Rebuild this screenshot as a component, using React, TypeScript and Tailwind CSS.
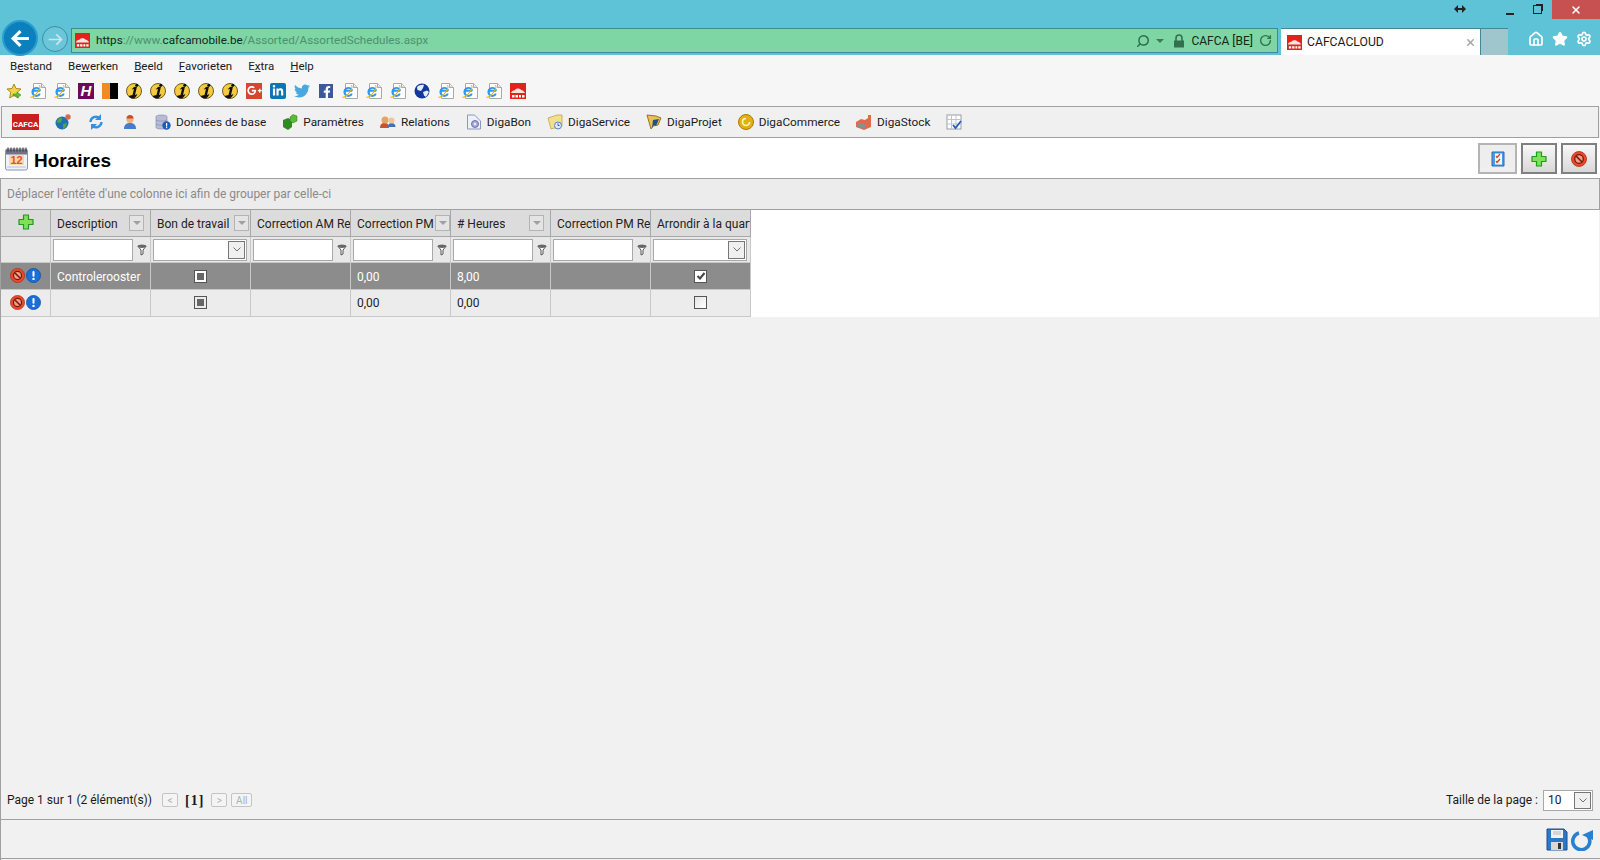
import { ReactNode } from "react";
import { FaFacebookF, FaGooglePlusG, FaLinkedinIn, FaTwitter } from "react-icons/fa";
import { Home, RotateCw, Search, Settings, Star, X } from "lucide-react";

type SvgProps = { className?: string };

function CafcaSquare({ className = "w-4 h-4" }: SvgProps) {
  return (
    <svg viewBox="0 0 16 16" className={className}>
      <rect width="16" height="16" fill="#e3231b" />
      <path d="M1 10c1-3 3-2 4-3 1-2 5-2 6 0 1 0 3 1 4 3z" fill="#f6e4e0" />
      <path d="M2 12h2.500v2.500H2zM5.500 12H8v2.500H5.500zM9 12h2v2.500H9zM12 12h2.500v2.500H12z" fill="#fff" />
    </svg>
  );
}

function IeDoc({ className = "w-4 h-4" }: SvgProps) {
  return (
    <svg viewBox="0 0 16 16" className={className}>
      <path d="M3.500 .5h8l4 4v11h-12z" fill="#fff" stroke="#a9a9a9" />
      <path d="M11.500 .5v4h4" fill="#e6e6e6" stroke="#a9a9a9" />
      <path d="M2.800 7.800h7.400M9.900 10.800a4 4 0 1 1 .3-3" fill="none" stroke="#2f96e8" strokeWidth="1.900" />
      <path d="M.5 14c1.200 1 6-2 8.500-7 1.200-2.500 1.600-4 0-4.500" fill="none" stroke="#efb324" strokeWidth="1.100" />
    </svg>
  );
}

function YellowI({ className = "w-4 h-4" }: SvgProps) {
  return (
    <svg viewBox="0 0 16 16" className={className}>
      <circle cx="8" cy="8" r="7.500" fill="#f3cb3c" stroke="#4a3a08" strokeWidth="0.800" />
      <path d="M2.500 13l4-1 1.500-6-2.500.5 2.500-2.500 3-.5L9 12l2.500-1c-1 2.500-3 4.500-5 4.500-1.500 0-3-1-4-2.500z" fill="#111" />
      <circle cx="10.800" cy="2.300" r="1.500" fill="#111" />
    </svg>
  );
}

function Globe({ className = "w-4 h-4" }: SvgProps) {
  return (
    <svg viewBox="0 0 16 16" className={className}>
      <circle cx="8" cy="8" r="7.500" fill="#12389c" />
      <path d="M3 4c2-2 5-2.500 7-2L9 5 7 8 3.500 7zM9 9l4-1.500L15 9l-3 5-2-1.500z" fill="#e4eefa" />
    </svg>
  );
}

function RedStop({ className = "w-4 h-4" }: SvgProps) {
  return (
    <svg viewBox="0 0 16 16" className={className}>
      <circle cx="8" cy="8" r="7.500" fill="#ec4a2c" stroke="#b02a14" strokeWidth="0.800" />
      <circle cx="8" cy="8" r="4.300" fill="#f79b85" stroke="#701a0c" strokeWidth="1.300" />
      <path d="M5 5l6 6" stroke="#701a0c" strokeWidth="1.600" />
    </svg>
  );
}

function BlueInfo({ className = "w-4 h-4" }: SvgProps) {
  return (
    <svg viewBox="0 0 16 16" className={className}>
      <circle cx="8" cy="8" r="7.500" fill="#1a6fd8" stroke="#0f4c9f" strokeWidth="0.800" />
      <rect x="6.900" y="3.200" width="2.200" height="6" rx="1" fill="#fff" />
      <circle cx="8" cy="11.600" r="1.300" fill="#fff" />
    </svg>
  );
}

function GreenPlus({ className = "w-4 h-4" }: SvgProps) {
  return (
    <svg viewBox="0 0 16 16" className={className}>
      <path d="M5.500 1h5v4.500H15v5h-4.500V15h-5v-4.500H1v-5h4.500z" fill="#7fe05a" stroke="#1f9a1f" strokeWidth="1.200" strokeLinejoin="round" />
    </svg>
  );
}

function Funnel() {
  return (
    <svg viewBox="0 0 10 12" className="w-[10px] h-3">
      <path d="M.8 2l3.200 4v5l2-1V6l3.200-4z" fill="#fff" stroke="#555" />
      <ellipse cx="5" cy="2.300" rx="4" ry="1.700" fill="#666" />
    </svg>
  );
}

function Calendar() {
  return (
    <svg viewBox="0 0 25 25" className="w-[25px] h-[25px]">
      <rect x="1.500" y="3" width="22" height="21" rx="2" fill="#f1f3fa" stroke="#8b93b5" />
      <rect x="2" y="3.500" width="21" height="5" fill="#6f7486" />
      <path d="M4 1.500v4M7 1.500v4M10 1.500v4M13 1.500v4M16 1.500v4M19 1.500v4M22 1.500v4" stroke="#333" />
      <rect x="5" y="9" width="15" height="10" fill="#fbd9ab" />
      <text x="12.500" y="18" textAnchor="middle" fontSize="11" fontWeight="700" fill="#e4561c" fontFamily="Liberation Sans, sans-serif">12</text>
      <path d="M3 21h19" stroke="#b8c0dc" />
    </svg>
  );
}

function TopIcon({ kind }: { kind: string }) {
  if (kind === "fav")
    return (
      <svg viewBox="0 0 16 16" className="w-4 h-4">
        <path d="M8 1l2 4.500 5 .5-3.700 3.200L12.300 15 8 12.300 3.700 15l1-5.800L1 6l5-.5z" fill="#f7d34a" stroke="#a98920" />
        <path d="M7 11h4V9l4 3-4 3v-2H7z" fill="#5cc13c" stroke="#2f8a1f" strokeWidth="0.500" />
      </svg>
    );
  if (kind === "ie") return <IeDoc />;
  if (kind === "h")
    return (
      <div className="w-4 h-4 bg-[#6a0a5d] flex items-center justify-center text-white text-[15px] font-bold italic leading-none [font-family:'Liberation_Sans',sans-serif]">
        H
      </div>
    );
  if (kind === "flag")
    return (
      <div className="w-4 h-4 flex">
        <div className="w-2 bg-[#f08a24]" />
        <div className="w-2 bg-black" />
      </div>
    );
  if (kind === "yellow") return <YellowI />;
  if (kind === "gplus")
    return (
      <div className="w-4 h-4 bg-[#d5452f] flex items-center justify-center">
        <FaGooglePlusG className="text-white w-[15px] h-[15px]" />
      </div>
    );
  if (kind === "in")
    return (
      <div className="w-4 h-4 rounded-[2px] bg-[#0a76b4] flex items-center justify-center">
        <FaLinkedinIn className="text-white w-3 h-3" />
      </div>
    );
  if (kind === "tw") return <FaTwitter className="text-[#4aa8e0] w-4 h-4" />;
  if (kind === "fb")
    return (
      <div className="w-[14px] h-[14px] mt-px bg-[#3b5998] flex items-end justify-end overflow-hidden">
        <FaFacebookF className="text-white w-3 h-3" />
      </div>
    );
  if (kind === "globe") return <Globe />;
  return <CafcaSquare />;
}

const favorites = ["fav", "ie", "ie", "h", "flag", "yellow", "yellow", "yellow", "yellow", "yellow", "gplus", "in", "tw", "fb", "ie", "ie", "ie", "globe", "ie", "ie", "ie", "cafca"];

function NavIcon({ kind }: { kind: string }) {
  switch (kind) {
    case "net":
      return (
        <svg viewBox="0 0 16 16" className="w-4 h-4">
          <circle cx="7" cy="9" r="6.500" fill="#1f6fb4" />
          <path d="M4 4c2-1 3 0 3 2L5 9 1.500 8zM8 10l4-1-1 4-3 2z" fill="#4fa83f" />
          <circle cx="13" cy="3" r="2.700" fill="#d9694a" />
        </svg>
      );
    case "sync":
      return (
        <svg viewBox="0 0 16 16" className="w-4 h-4" fill="none" stroke="#3a8fdc" strokeWidth="2.400">
          <path d="M2.500 8a5.500 5.500 0 0 1 9-4" />
          <path d="M13.500 8a5.500 5.500 0 0 1-9 4" />
          <path d="M13 0v6H7z" fill="#3a8fdc" stroke="none" />
          <path d="M3 16v-6h6z" fill="#3a8fdc" stroke="none" />
        </svg>
      );
    case "user":
      return (
        <svg viewBox="0 0 16 16" className="w-4 h-4">
          <path d="M2 15c0-5 3-6 6-6s6 1 6 6z" fill="#3f7fd0" />
          <circle cx="8" cy="5.500" r="3.500" fill="#eab08a" />
          <path d="M4.500 4.500a3.500 3.500 0 0 1 7 0z" fill="#d9452a" />
        </svg>
      );
    case "db":
      return (
        <svg viewBox="0 0 16 16" className="w-4 h-4">
          <path d="M1 2.500c0-2 11-2 11 0v11c0 2-11 2-11 0z" fill="#b4bcd6" stroke="#7c86a8" strokeWidth="0.600" />
          <path d="M1 6c2 1.500 9 1.500 11 0M1 10c2 1.500 9 1.500 11 0" fill="none" stroke="#7c86a8" strokeWidth="0.600" />
          <circle cx="11.500" cy="11.500" r="4.200" fill="#1a5fb8" />
          <rect x="11" y="9" width="1.200" height="3.500" fill="#fff" />
          <rect x="11" y="13" width="1.200" height="1.200" fill="#fff" />
        </svg>
      );
    case "param":
      return (
        <svg viewBox="0 0 16 16" className="w-4 h-4">
          <path d="M1 6l5-2 4 2v7l-4 3-5-3z" fill="#2f8a22" />
          <path d="M8 3l3-2.500 4 1.500v5l-4 2-3-2z" fill="#5cba3a" stroke="#2b7a1d" strokeWidth="0.500" />
        </svg>
      );
    case "rel":
      return (
        <svg viewBox="0 0 16 16" className="w-4 h-4">
          <path d="M0 14c0-4 2-5 4.500-5S9 10 9 14z" fill="#c9542b" />
          <circle cx="5" cy="6" r="3.500" fill="#e9a266" />
          <path d="M8 13c0-3 1.500-4 3.500-4s4 1 4 4z" fill="#3f72b8" />
          <circle cx="11.500" cy="6.500" r="3" fill="#f0c59a" />
        </svg>
      );
    case "bon":
      return (
        <svg viewBox="0 0 16 16" className="w-4 h-4">
          <path d="M1.500 1h7l6 6v8h-13z" fill="#eef1fa" stroke="#8d97b8" />
          <circle cx="9" cy="10" r="3.500" fill="#a8a8d8" stroke="#6f74a8" />
          <circle cx="9" cy="10" r="1.200" fill="#eef1fa" />
        </svg>
      );
    case "service":
      return (
        <svg viewBox="0 0 16 16" className="w-4 h-4">
          <path d="M1 4l9-3h5v11l-11 3z" fill="#f3de8c" stroke="#b99b3a" strokeWidth="0.700" />
          <circle cx="11" cy="11.500" r="3.500" fill="#dcebfa" stroke="#4c86c4" />
          <path d="M11 9.500v2h1.500" stroke="#2d5f9a" fill="none" />
        </svg>
      );
    case "projet":
      return (
        <svg viewBox="0 0 16 16" className="w-4 h-4">
          <path d="M1 1l9 1 5 2-3 7-5 1-2 3z" fill="#e9c05a" stroke="#9c7414" />
          <path d="M7 6l6-1-3 7-2-1-2 3z" fill="#274f8c" />
        </svg>
      );
    case "commerce":
      return (
        <svg viewBox="0 0 16 16" className="w-4 h-4">
          <circle cx="8" cy="8" r="7.500" fill="#e3b010" stroke="#a87d08" />
          <circle cx="8" cy="8" r="3.500" fill="none" stroke="#fff6d0" strokeWidth="1.600" strokeDasharray="16 6" />
        </svg>
      );
    case "stock":
      return (
        <svg viewBox="0 0 16 16" className="w-4 h-4">
          <path d="M0 8l5-3 4 1 3-2V1h3v12l-7 3-8-3z" fill="#e2694a" />
          <path d="M1 9l8 1v5l-8-2z" fill="#8d8d8d" />
        </svg>
      );
    case "table":
      return (
        <svg viewBox="0 0 16 16" className="w-4 h-4">
          <rect x="1" y="1" width="14" height="14" fill="#fff" stroke="#9a9aa8" />
          <path d="M1 5.500h14M1 10h14M5.500 1v14M10 1v14" stroke="#c2c2cc" />
          <path d="M7 11l2.500 3L15 7" fill="none" stroke="#1f5fc0" strokeWidth="1.800" />
        </svg>
      );
    default:
      return <div />;
  }
}

const navItems = [
  { kind: "net" },
  { kind: "sync", cls: "ml-px" },
  { kind: "user", cls: "ml-[2px]" },
  { kind: "db", label: "Données de base", cls: "ml-px" },
  { kind: "param", label: "Paramètres" },
  { kind: "rel", label: "Relations" },
  { kind: "bon", label: "DigaBon" },
  { kind: "service", label: "DigaService" },
  { kind: "projet", label: "DigaProjet" },
  { kind: "commerce", label: "DigaCommerce" },
  { kind: "stock", label: "DigaStock" },
  { kind: "table" },
];

function Cell({ children, className = "" }: { children?: ReactNode; className?: string }) {
  return <div className={`flex items-center overflow-hidden whitespace-nowrap border-r border-b ${className}`}>{children}</div>;
}

function HeaderCell({ label, filter, pad = "" }: { label: string; filter: boolean; pad?: string }) {
  return (
    <Cell className="border-[#a8a8a8] bg-[#dcdcdc] pl-[6px] justify-between">
      <span className="overflow-hidden pt-[2px]">{label}</span>
      {filter && (
        <span className={`shrink-0 w-[15px] h-4 border border-[#b4b4b4] bg-[#e4e4e4] flex items-center justify-center ${pad}`}>
          <span className="border-x-[4px] border-t-[4px] border-x-transparent border-t-[#a0a0a0]" />
        </span>
      )}
    </Cell>
  );
}

function FilterInput() {
  return (
    <Cell className="border-[#c8c8c8] bg-[#e8e8e8] pl-[2px] gap-[4px]">
      <div className="w-[80px] h-[22px] bg-white border border-[#a8a8a8]" />
      <Funnel />
    </Cell>
  );
}

function Chevron() {
  return (
    <svg viewBox="0 0 8 5" className="w-2 h-[5px]" fill="none" stroke="#707070">
      <path d="M.5 .5L4 4 7.500 .5" />
    </svg>
  );
}

function FilterSelect() {
  return (
    <Cell className="border-[#c8c8c8] bg-[#e8e8e8] pl-[2px]">
      <div className="w-[94px] h-[22px] bg-white border border-[#a8a8a8] flex justify-end p-px">
        <div className="w-[17px] h-full bg-[#f0f0f0] border border-[#777] flex items-center justify-center">
          <Chevron />
        </div>
      </div>
    </Cell>
  );
}

function RowIcons({ className }: { className: string }) {
  return (
    <Cell className={`${className} justify-center gap-px pb-[2px]`}>
      <RedStop className="w-[15px] h-[15px]" />
      <BlueInfo className="w-[15px] h-[15px]" />
    </Cell>
  );
}

function Mixed({ light }: { light: boolean }) {
  return (
    <div className={`w-[13px] h-[13px] flex items-center justify-center ${light ? "bg-[#ececec] border-[1.500px] border-[#555]" : "bg-white border border-[#555]"}`}>
      <div className="w-[7px] h-[7px] bg-[#666]" />
    </div>
  );
}

function PageButton({ children, w }: { children: ReactNode; w: string }) {
  return <div className={`${w} h-[14px] border border-[#c4c4c4] rounded-[2px] bg-[#f4f4f4] flex items-center justify-center text-[#b0b0b0] text-[10px]`}>{children}</div>;
}

function ActionButton({ children, w, on }: { children: ReactNode; w: string; on: boolean }) {
  return (
    <button className={`${w} h-[31px] flex items-center justify-center border-2 ${on ? "border-[#808080] bg-gradient-to-b from-[#f8f8f8] to-[#d8d8d8]" : "border-[#b4b4b4] bg-[#eeeeee]"}`}>
      {children}
    </button>
  );
}

export default function App() {
  const s1 = "border-[#c8c8c8] bg-[#8c8c8c] text-white pl-[6px] pt-px";
  const s2 = "border-[#c8c8c8] bg-[#ececec] pl-[6px] pb-px";

  return (
    <div className="h-[860px] w-[1600px] flex flex-col overflow-hidden bg-[#f1f1f1] text-[12px] text-[#1a1a1a] [font-family:Roboto,sans-serif]">
      {/* browser chrome */}
      <div className="h-[55px] shrink-0 bg-[#5fc3d8] flex flex-col">
        <div className="h-[19px] flex justify-end items-start">
          <svg viewBox="0 0 12 8" className="w-3 h-2 mt-[5px] mr-[32px]" fill="#222">
            <path d="M0 4l4-4v3h4V0l4 4-4 4V5H4v3z" />
          </svg>
          <div className="w-[24px] h-[19px] flex items-center justify-center">
            <div className="w-2 h-[2px] bg-[#222] mt-2" />
          </div>
          <div className="w-[30px] h-[19px] flex items-center justify-center">
            <div className="w-[9px] h-[9px] border-[1.500px] border-[#222] shadow-[2px_-2px_0_-1px_#222]" />
          </div>
          <div className="w-[48px] h-[19px] bg-[#c75050] flex items-center justify-center">
            <X className="w-[12px] h-[12px] text-white" strokeWidth={3} />
          </div>
        </div>
        <div className="flex-1 flex items-end">
          <div className="relative w-[71px] h-full">
            <div className="absolute left-[2px] top-[1px] w-[36px] h-[36px] rounded-full bg-[#0b80bd] border-2 border-[#2a9ccd] flex items-center justify-center">
              <svg viewBox="0 0 20 20" className="w-[21px] h-[21px]" fill="none" stroke="#fff" strokeWidth="3">
                <path d="M18 10H3M10 3l-7 7 7 7" />
              </svg>
            </div>
            <div className="absolute left-[42px] top-[7px] w-[26px] h-[26px] rounded-full border border-[#3c8ea4] bg-[#6cc6da] flex items-center justify-center">
              <svg viewBox="0 0 20 20" className="w-[17px] h-[17px]" fill="none" stroke="#c8e8ee" strokeWidth="2">
                <path d="M2 10h15M11 4l6 6-6 6" />
              </svg>
            </div>
          </div>
          <div className="w-[1207px] h-[25px] mb-[2px] bg-[#7dd6a3] border border-[#3f8a96] flex items-center pl-[3px] pr-[5px]">
            <CafcaSquare className="w-[15px] h-[15px]" />
            <span className="ml-[6px] text-[11.7px] text-[#4f8f70]">
              <span className="text-[#16261e]">https</span>://www.<span className="text-[#16261e]">cafcamobile.be</span>/Assorted/AssortedSchedules.aspx
            </span>
            <Search className="ml-auto w-[14px] h-[14px] text-[#2f6b4a] -scale-x-100" strokeWidth={2.500} />
            <span className="ml-[6px] border-x-[4px] border-t-[4px] border-x-transparent border-t-[#3e7a5a]" />
            <svg viewBox="0 0 12 14" className="ml-[9px] w-3 h-[14px]">
              <path d="M3 7V4a3 3 0 0 1 6 0v3" fill="none" stroke="#34704f" strokeWidth="1.600" />
              <rect x="1" y="6.500" width="10" height="7" fill="#34704f" />
            </svg>
            <span className="ml-[6px] text-[12px] text-[#16261e]">CAFCA [BE]</span>
            <RotateCw className="ml-[6px] w-[13px] h-[13px] text-[#34704f]" strokeWidth={2.500} />
          </div>
          <div className="ml-[3px] w-[199px] h-[27px] bg-white flex items-center pl-[6px] pr-[4px] border-t border-[#3f8a96]">
            <CafcaSquare className="w-[15px] h-[15px]" />
            <span className="ml-[5px] text-[12.2px]">CAFCACLOUD</span>
            <X className="ml-auto w-[11px] h-[11px] text-[#aaaaaa]" strokeWidth={3.500} />
          </div>
          <div className="w-[28px] h-[27px] bg-[#9fc6cc] border-t border-l border-[#3f8a96]" />
          <div className="flex-1 h-[27px] mb-[3px] flex items-center justify-end gap-[8px] pr-[8px]">
            <Home className="w-4 h-4 text-white" strokeWidth={2.500} />
            <Star className="w-4 h-4 text-white fill-white" />
            <Settings className="w-4 h-4 text-white" strokeWidth={2.500} />
          </div>
        </div>
      </div>

      {/* menu */}
      <div className="h-[22px] shrink-0 bg-[#f6f6f6] flex items-center gap-[16px] pl-[10px] pt-[2px] text-[11.5px]">
        <span>B<u>e</u>stand</span>
        <span>Be<u>w</u>erken</span>
        <span><u>B</u>eeld</span>
        <span><u>F</u>avorieten</span>
        <span>E<u>x</u>tra</span>
        <span><u>H</u>elp</span>
      </div>

      {/* favorites */}
      <div className="h-[29px] shrink-0 bg-[#f6f6f6] flex items-center gap-[8px] pl-[6px] pb-[2px]">
        {favorites.map((kind, i) => (
          <div key={i} className="w-4 h-4 flex justify-center">
            <TopIcon kind={kind} />
          </div>
        ))}
      </div>

      {/* app nav */}
      <div className="h-[32px] shrink-0 bg-[#f0f0f0] border border-[#a0a0a0] mx-px flex items-center gap-[16px] pl-[10px]">
        <div className="w-[27px] h-4 bg-[#c9201c] flex items-end justify-center text-white text-[8px] font-bold leading-[10px]">CAFCA</div>
        {navItems.map((item) => (
          <div key={item.kind} className={`flex items-center gap-[5px] ${item.cls ?? ""}`}>
            <NavIcon kind={item.kind} />
            {item.label && <span className="pt-px text-[11.8px]">{item.label}</span>}
          </div>
        ))}
      </div>

      {/* page title */}
      <div className="h-[40px] shrink-0 bg-white flex items-center pl-[4px] pr-[3px]">
        <Calendar />
        <h1 className="ml-[5px] mt-[7px] text-[19px] font-bold text-black [font-family:'Liberation_Sans',sans-serif]">Horaires</h1>
        <div className="ml-auto mt-px flex gap-[4px]">
          <ActionButton w="w-[39px]" on={false}>
            <svg viewBox="0 0 16 16" className="w-4 h-4">
              <path d="M2 1h12v14H2z" fill="#4c9be0" stroke="#2a6cb0" />
              <rect x="5" y="2.500" width="7" height="11" fill="#f4f8fc" />
              <path d="M6 5l1 1.500L10 3M6 10l1 1.500L10 8" fill="none" stroke="#d43a2a" strokeWidth="1.300" />
            </svg>
          </ActionButton>
          <ActionButton w="w-[36px]" on>
            <GreenPlus />
          </ActionButton>
          <ActionButton w="w-[36px]" on>
            <RedStop />
          </ActionButton>
        </div>
      </div>

      {/* group panel */}
      <div className="h-[32px] shrink-0 bg-[#ececec] border border-[#a0a0a0] flex items-center pl-[6px] text-[#8a8a8a]">
        Déplacer l'entête d'une colonne ici afin de grouper par celle-ci
      </div>

      {/* grid + pager */}
      <div className="flex-1 flex flex-col border-l border-[#a0a0a0] min-h-0">
        <div className="bg-white -mt-px border-t border-[#a0a0a0] mr-px">
          <div className="w-[750px] grid grid-cols-[50px_repeat(7,100px)] grid-rows-[27px_26px_27px_27px] text-[#222]">
            <Cell className="border-[#a8a8a8] bg-[#dcdcdc] justify-center pb-[2px]">
              <GreenPlus />
            </Cell>
            <HeaderCell label="Description" filter pad="mr-[6px]" />
            <HeaderCell label="Bon de travail" filter pad="mr-px" />
            <HeaderCell label="Correction AM Re" filter={false} />
            <HeaderCell label="Correction PM" filter />
            <HeaderCell label="# Heures" filter pad="mr-[6px]" />
            <HeaderCell label="Correction PM Rei" filter={false} />
            <HeaderCell label="Arrondir à la quart" filter={false} />

            <Cell className="border-[#c8c8c8] bg-[#e8e8e8]" />
            <FilterInput />
            <FilterSelect />
            <FilterInput />
            <FilterInput />
            <FilterInput />
            <FilterInput />
            <FilterSelect />

            <RowIcons className="border-[#c8c8c8] bg-[#8c8c8c]" />
            <Cell className={s1}>Controlerooster</Cell>
            <Cell className={`${s1} justify-center !p-0`}>
              <Mixed light={false} />
            </Cell>
            <Cell className={s1} />
            <Cell className={s1}>0,00</Cell>
            <Cell className={s1}>8,00</Cell>
            <Cell className={s1} />
            <Cell className={`${s1} justify-center !p-0`}>
              <div className="w-[13px] h-[13px] bg-white border border-[#555] flex items-center justify-center">
                <svg viewBox="0 0 10 10" className="w-[10px] h-[10px]" fill="none" stroke="#444" strokeWidth="2">
                  <path d="M1.500 5l2.500 2.500L8.500 2" />
                </svg>
              </div>
            </Cell>

            <RowIcons className="border-[#c8c8c8] bg-[#ececec]" />
            <Cell className={s2} />
            <Cell className={`${s2} justify-center !p-0 !pb-px`}>
              <Mixed light />
            </Cell>
            <Cell className={s2} />
            <Cell className={s2}>0,00</Cell>
            <Cell className={s2}>0,00</Cell>
            <Cell className={s2} />
            <Cell className={`${s2} justify-center !p-0 !pb-px`}>
              <div className="w-[13px] h-[13px] bg-gradient-to-br from-[#e4e4e4] to-white border border-[#555]" />
            </Cell>
          </div>
        </div>

        <div className="flex-1" />

        <div className="h-[40px] shrink-0 flex items-center pl-[6px] pr-[7px] pt-[2px]">
          <span>Page 1 sur 1 (2 élément(s))</span>
          <div className="ml-[10px]">
            <PageButton w="w-[16px]">&lt;</PageButton>
          </div>
          <span className="ml-[7px] font-bold text-[14px] tracking-[1px] [font-family:'Liberation_Serif',serif]">[1]</span>
          <div className="ml-[7px]">
            <PageButton w="w-[16px]">&gt;</PageButton>
          </div>
          <div className="ml-[4px]">
            <PageButton w="w-[21px]">All</PageButton>
          </div>
          <span className="ml-auto">Taille de la page :</span>
          <div className="ml-[5px] w-[50px] h-[21px] bg-white border border-[#a8a8a8] flex items-center pl-[4px] pr-px">
            10
            <div className="ml-auto w-[17px] h-[17px] bg-[#f0f0f0] border border-[#777] flex items-center justify-center">
              <Chevron />
            </div>
          </div>
        </div>

        <div className="h-[40px] shrink-0 border-y border-[#a0a0a0] flex items-center justify-end gap-[3px] pr-[6px] mb-px">
          <svg viewBox="0 0 22 23" className="w-[22px] h-[23px]">
            <path d="M1 1h17l3 3v18H1z" fill="#2a78c8" stroke="#1a4f90" />
            <rect x="5" y="2" width="12" height="8" fill="#f2f2f2" />
            <path d="M7 4h8M7 6h8" stroke="#b8b8b8" />
            <rect x="5" y="14" width="12" height="8" fill="#d8d8d8" />
            <rect x="12" y="15" width="3" height="6" fill="#333" />
          </svg>
          <svg viewBox="0 0 23 23" className="w-[23px] h-[23px]" fill="none">
            <path d="M8 5a8.500 8.500 0 1 0 9 3" stroke="#2a80d0" strokeWidth="3.600" />
            <path d="M22 2v10L11 7z" fill="#2a80d0" />
          </svg>
        </div>
      </div>
    </div>
  );
}
